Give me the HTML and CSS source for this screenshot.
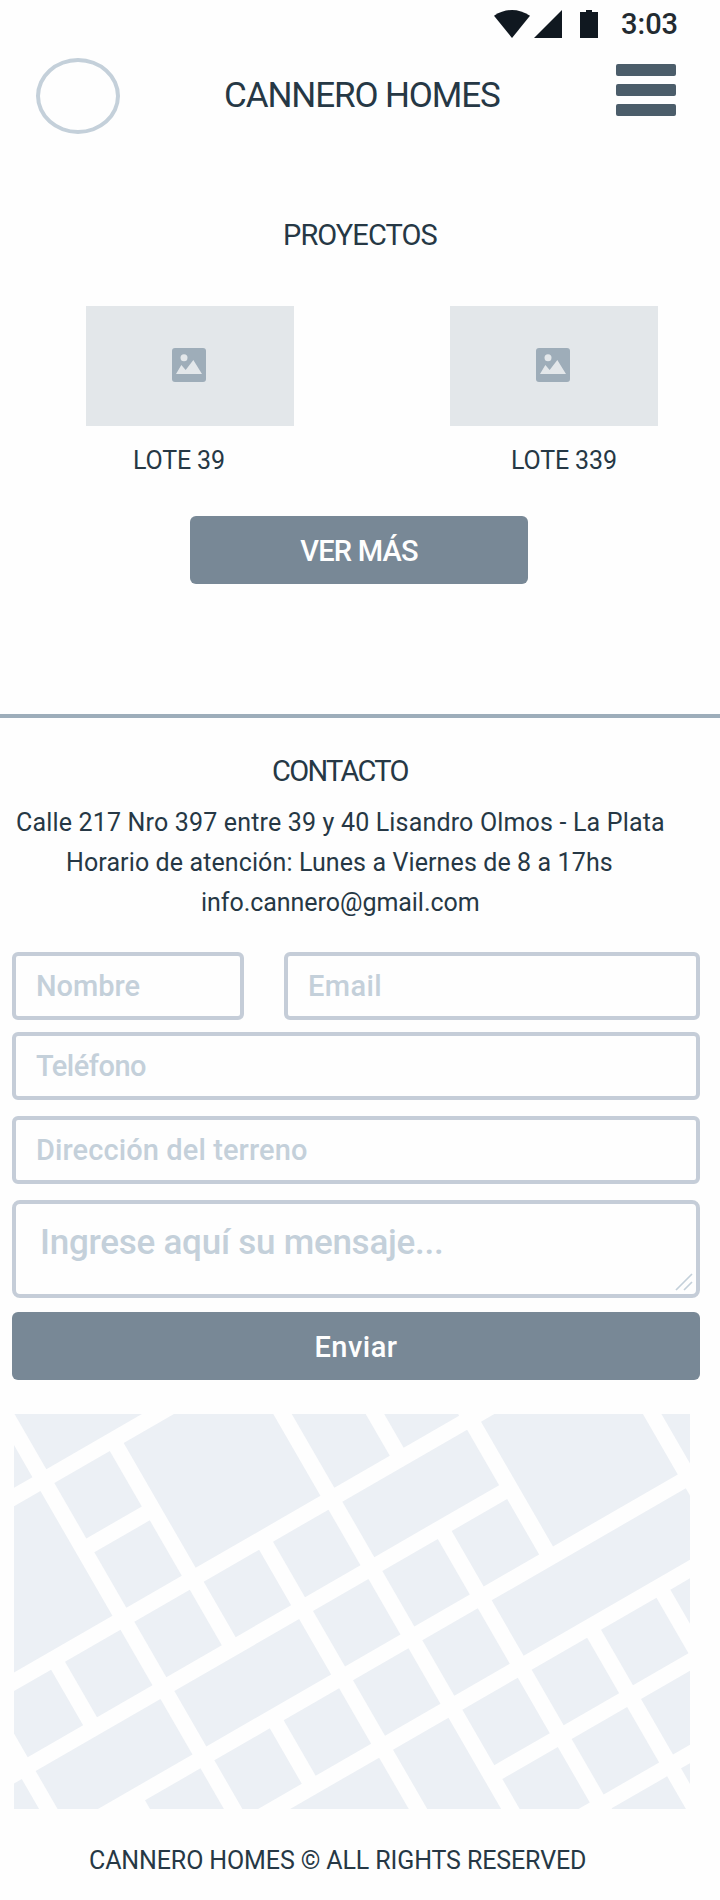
FILE: index.html
```html
<!DOCTYPE html>
<html lang="es">
<head>
<meta charset="utf-8">
<title>Cannero Homes</title>
<link rel="stylesheet" href="styles.css">
</head>
<body>
<div class="status">
  <svg class="status-icons" viewBox="0 0 312 84" width="104" height="28">
    <path d="M0 17Q54-17 108 17L54 84Z"/>
    <path d="M120 84L204 0V84Z"/>
    <path d="M258 6H276V0H294V6H312V84H258Z"/>
  </svg>
  <span class="clock">3:03</span>
</div>
<header class="header">
  <div class="logo"></div>
  <h1 class="brand">CANNERO HOMES</h1>
  <div class="menu"><span></span><span></span><span></span></div>
</header>
<main>
  <section class="projects">
    <h2 class="heading heading-projects">PROYECTOS</h2>
    <div class="lots">
      <article class="lot">
        <div class="thumb"><svg class="thumb-icon" viewBox="0 0 102 102" width="34" height="34"><rect class="frame" width="102" height="102" rx="9"/><circle cx="36" cy="29" r="10.5"/><path d="M12 78L28 51 41 66 64 36 90 78Z"/></svg></div>
        <p class="lot-name">LOTE 39</p>
      </article>
      <article class="lot">
        <div class="thumb"><svg class="thumb-icon" viewBox="0 0 102 102" width="34" height="34"><rect class="frame" width="102" height="102" rx="9"/><circle cx="36" cy="29" r="10.5"/><path d="M12 78L28 51 41 66 64 36 90 78Z"/></svg></div>
        <p class="lot-name lot-name-wide">LOTE 339</p>
      </article>
    </div>
    <button class="button more">VER MÁS</button>
  </section>
  <section class="contact">
    <h2 class="heading heading-contact">CONTACTO</h2>
    <p class="line address">Calle 217 Nro 397 entre 39 y 40 Lisandro Olmos - La Plata</p>
    <p class="line hours">Horario de atención: Lunes a Viernes de 8 a 17hs</p>
    <p class="line mail">info.cannero@gmail.com</p>
    <form class="form">
      <div class="row">
        <input class="field name" placeholder="Nombre">
        <input class="field email" placeholder="Email">
      </div>
      <input class="field phone" placeholder="Teléfono">
      <input class="field place" placeholder="Dirección del terreno">
      <div class="message">
        <textarea class="field text" placeholder="Ingrese aquí su mensaje..."></textarea>
        <svg class="grip" viewBox="0 0 18 18" width="18" height="18"><path d="M1 17L17 1M9 17L17 9"/></svg>
      </div>
      <button class="button send" type="button">Enviar</button>
    </form>
    <svg class="map" viewBox="42 42 2028 1185" width="676" height="395" preserveAspectRatio="none">
      <g transform="matrix(.86667 -.5 .5 .86667 163 249)">
        <rect x="-240" y="-240" width="192" height="192"/>
        <rect x="0" y="-240" width="432" height="192"/>
        <rect x="-480" y="0" width="432" height="432"/>
        <rect x="0" y="0" width="192" height="192"/>
        <rect x="240" y="0" width="432" height="432"/>
        <rect x="720" y="0" width="192" height="432"/>
        <rect x="0" y="240" width="192" height="192"/>
        <rect x="960" y="240" width="192" height="192"/>
        <rect x="-480" y="480" width="192" height="192"/>
        <rect x="-240" y="480" width="192" height="192"/>
        <rect x="0" y="480" width="192" height="192"/>
        <rect x="240" y="480" width="192" height="192"/>
        <rect x="480" y="480" width="192" height="192"/>
        <rect x="720" y="480" width="432" height="192"/>
        <rect x="1200" y="480" width="432" height="432"/>
        <rect x="1680" y="480" width="192" height="432"/>
        <rect x="-720" y="720" width="192" height="192"/>
        <rect x="-480" y="720" width="432" height="192"/>
        <rect x="0" y="720" width="432" height="192"/>
        <rect x="480" y="720" width="192" height="192"/>
        <rect x="720" y="720" width="192" height="192"/>
        <rect x="960" y="720" width="192" height="192"/>
        <rect x="-240" y="960" width="192" height="192"/>
        <rect x="0" y="960" width="192" height="192"/>
        <rect x="240" y="960" width="192" height="192"/>
        <rect x="480" y="960" width="192" height="192"/>
        <rect x="720" y="960" width="192" height="192"/>
        <rect x="960" y="960" width="672" height="192"/>
        <rect x="0" y="1200" width="432" height="432"/>
        <rect x="480" y="1200" width="192" height="432"/>
        <rect x="720" y="1200" width="192" height="192"/>
        <rect x="960" y="1200" width="192" height="192"/>
        <rect x="1200" y="1200" width="192" height="192"/>
        <rect x="1440" y="1200" width="192" height="192"/>
        <rect x="720" y="1440" width="192" height="192"/>
        <rect x="960" y="1440" width="192" height="192"/>
        <rect x="1200" y="1440" width="192" height="192"/>
        <rect x="960" y="1680" width="192" height="192"/>
        <rect x="1200" y="1680" width="192" height="192"/>
      </g>
    </svg>
  </section>
</main>
<footer class="footer">CANNERO HOMES © ALL RIGHTS RESERVED</footer>
</body>
</html>
```
FILE: styles.css
```css
* { box-sizing: border-box; }
body {
  margin: 0;
  width: 720px;
  height: 1900px;
  overflow: hidden;
  background: #fefefe;
  color: #263845;
  font-family: Roboto, sans-serif;
  font-size: 25px;
}
h1, h2, p { margin: 0; font-weight: 400; white-space: nowrap; }
svg { display: block; }

.status {
  display: flex;
  justify-content: flex-end;
  align-items: center;
  gap: 23px;
  height: 48px;
  padding-right: 43px;
}
.status-icons { fill: #101820; }
.clock { width: 56px; font-size: 29px; font-weight: 500; color: #232b31; white-space: nowrap; }

.header {
  display: flex;
  height: 96px;
  padding: 10px 44px 0 36px;
}
.logo {
  width: 84px;
  height: 76px;
  border: 4px solid #c4d0da;
  border-radius: 50%;
}
.brand {
  margin-left: 104px;
  width: 392px;
  font-size: 35px;
  line-height: 76px;
  letter-spacing: -1.1px;
}
.menu { display: flex; flex-direction: column; gap: 8px; padding-top: 6px; }
.menu span { width: 60px; height: 12px; border-radius: 2px; background: #4b5d6a; }

.projects { height: 570px; padding-top: 70px; }
.heading { font-size: 29px; line-height: 42px; }
.heading-projects { padding-left: 283px; letter-spacing: -0.9px; }
.lots {
  display: grid;
  grid-template-columns: 208px 208px;
  gap: 156px;
  padding: 50px 0 0 86px;
}
.thumb { height: 120px; padding: 42px 0 0 86px; background: #e3e7ea; }
.thumb-icon { fill: #e3e7ea; }
.frame { fill: #9eadb9; }
.lot-name { padding: 20px 0 0 47px; line-height: 30px; letter-spacing: -0.15px; }
.lot-name-wide { padding-left: 61px; }

.button {
  display: block;
  height: 68px;
  border: 0;
  border-radius: 6px;
  background: #788896;
  color: #fefefe;
  font: 500 29px/68px Roboto, sans-serif;
  padding: 1px 0 0;
}
.more { width: 338px; margin: 40px 0 0 190px; letter-spacing: -0.8px; }

.contact { border-top: 4px solid #9dadba; padding-top: 32px; }
.heading-contact { padding-left: 272px; letter-spacing: -1.7px; }
.line { line-height: 40px; }
.address { margin-top: 11px; padding-left: 16px; letter-spacing: 0.17px; }
.hours { padding-left: 66px; letter-spacing: 0.11px; }
.mail { padding-left: 201px; letter-spacing: -0.04px; }

.form { width: 688px; margin: 29px 0 0 12px; }
.row { display: flex; gap: 40px; }
.field {
  display: block;
  width: 100%;
  height: 68px;
  margin: 0;
  padding: 0 20px;
  border: 4px solid #c5cdd8;
  border-radius: 6px;
  background: transparent;
  outline: 0;
  font: 500 29px/40px Roboto, sans-serif;
}
.field::placeholder { color: #c4d0da; opacity: 1; }
.name { flex: 0 0 232px; width: 232px; }
.email { flex: 1; letter-spacing: 0.4px; }
.phone { margin-top: 12px; letter-spacing: -0.5px; }
.place { margin-top: 16px; letter-spacing: 0.1px; }
.message { position: relative; margin-top: 16px; }
.text {
  height: 98px;
  padding: 19px 24px 10px;
  border-radius: 8px;
  font-size: 35px;
  letter-spacing: -0.25px;
  resize: none;
  overflow: hidden;
}
.grip { position: absolute; right: 7px; bottom: 7px; fill: none; stroke: #c4d0da; stroke-width: 1.7; }
.send { width: 688px; margin-top: 14px; letter-spacing: 0.5px; }

.map { margin: 34px 0 0 14px; fill: #ecf0f5; }
.footer { padding: 32px 0 0 89px; line-height: 40px; letter-spacing: -0.12px; white-space: nowrap; }
```
